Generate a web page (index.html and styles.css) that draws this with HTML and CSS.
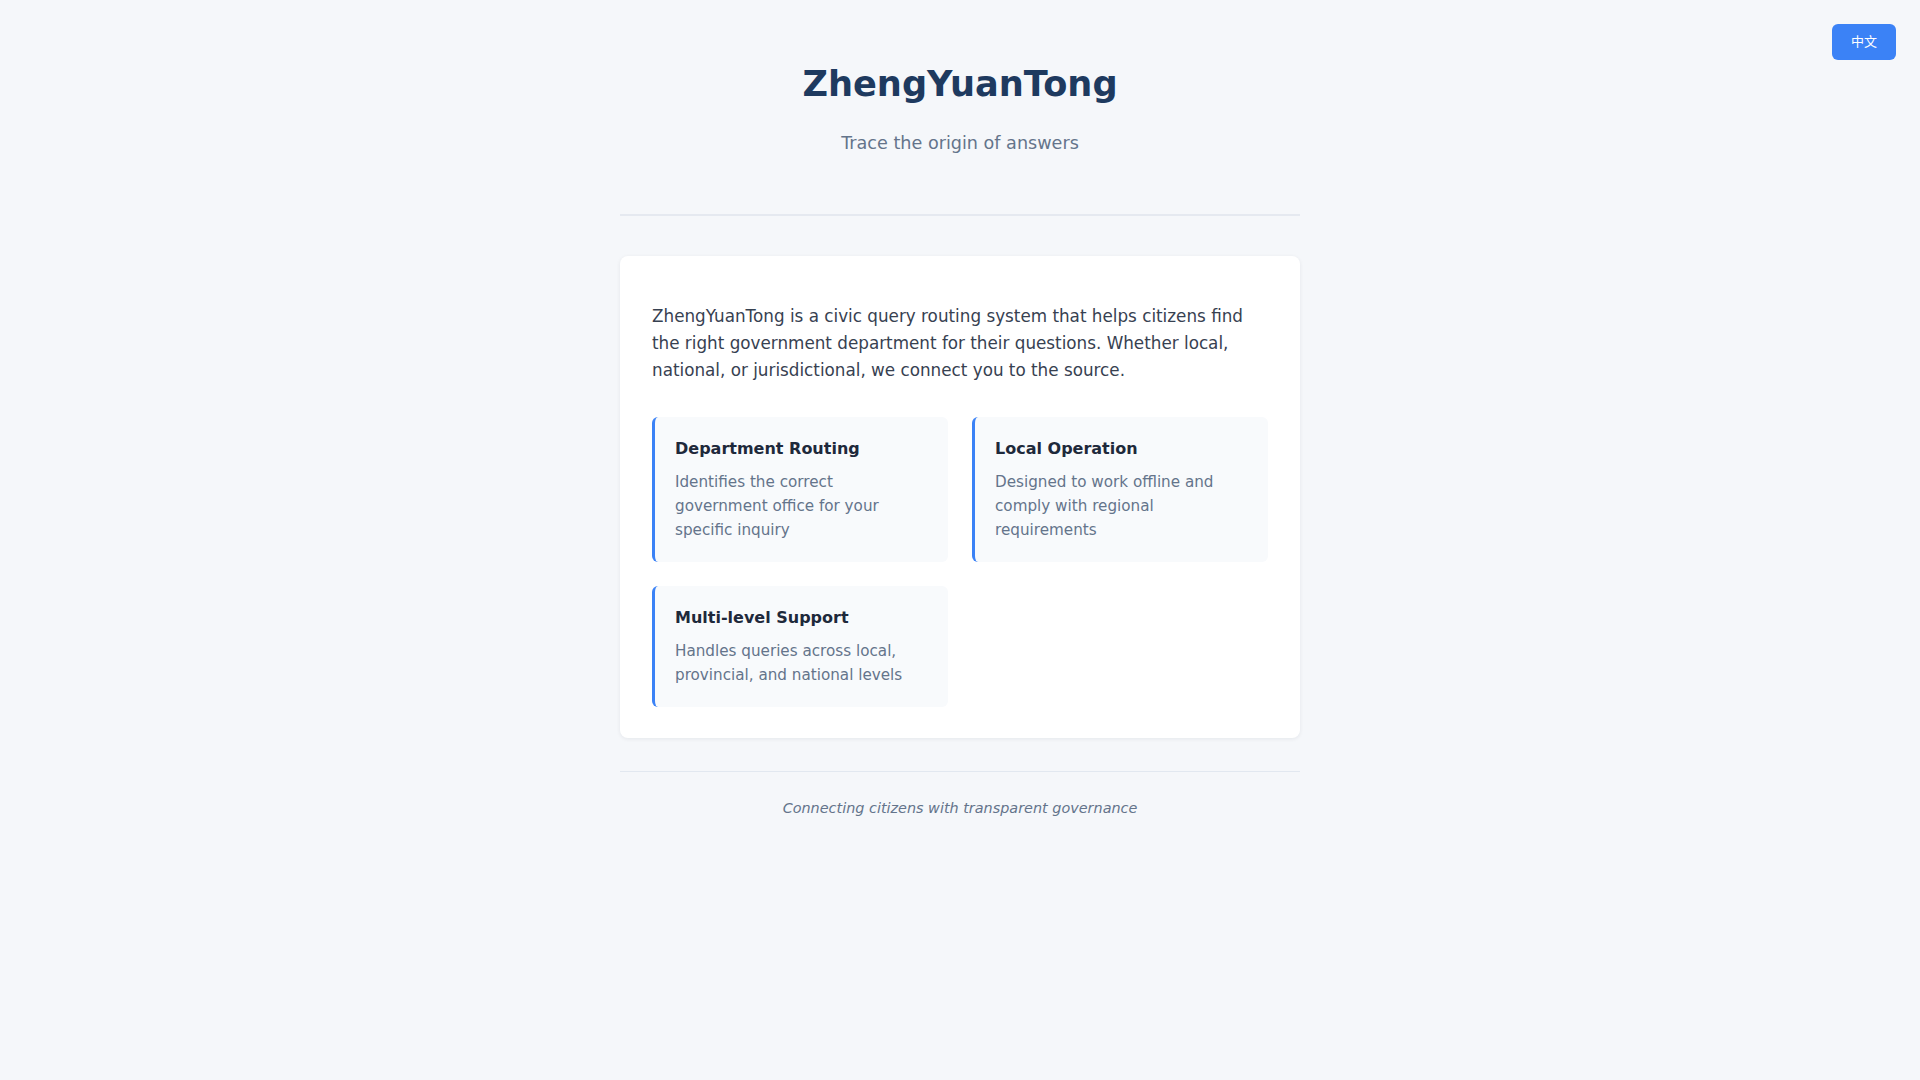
FILE: index.html
```html
<!DOCTYPE html>
<html lang="en">
<head>
<meta charset="utf-8">
<title>ZhengYuanTong</title>
<link rel="stylesheet" href="styles.css">
</head>
<body>
<button class="lang-btn">中文</button>
<div class="container">
  <header class="header">
    <h1 class="title">ZhengYuanTong</h1>
    <p class="subtitle">Trace the origin of answers</p>
  </header>
  <main class="card">
    <p class="intro">ZhengYuanTong is a civic query routing system that helps citizens find the right government department for their questions. Whether local, national, or jurisdictional, we connect you to the source.</p>
    <div class="features">
      <div class="feature">
        <h3 class="feature-title">Department Routing</h3>
        <p class="feature-desc">Identifies the correct government office for your specific inquiry</p>
      </div>
      <div class="feature">
        <h3 class="feature-title">Local Operation</h3>
        <p class="feature-desc">Designed to work offline and comply with regional requirements</p>
      </div>
      <div class="feature">
        <h3 class="feature-title">Multi-level Support</h3>
        <p class="feature-desc">Handles queries across local, provincial, and national levels</p>
      </div>
    </div>
  </main>
  <footer class="footer">
    <p class="footer-text">Connecting citizens with transparent governance</p>
  </footer>
</div>
</body>
</html>
```
FILE: styles.css
```css
* { box-sizing: border-box; }
html, body { margin: 0; padding: 0; }
body {
  background: #f5f7fa;
  font-family: "DejaVu Sans", "Noto Sans CJK SC", sans-serif;
  color: #334155;
  min-height: 100vh;
}
.lang-btn {
  position: absolute;
  top: 24px;
  right: 24px;
  background: #3b82f6;
  color: #ffffff;
  border: none;
  border-radius: 6px;
  padding: 9px 19px;
  font-size: 13px;
  line-height: 18px;
  font-family: "DejaVu Sans", "Noto Sans CJK SC", sans-serif;
  cursor: pointer;
}
.container {
  width: 680px;
  margin: 0 auto;
  padding-top: 63px;
}
.header {
  text-align: center;
  border-bottom: 2px solid #e5e9f0;
  padding-bottom: 58px;
  margin-bottom: 40px;
}
.title {
  margin: 0;
  font-size: 35.2px;
  line-height: 42px;
  font-weight: 700;
  color: #1e3a5f;
}
.subtitle {
  margin: 25px 0 0;
  font-size: 17.6px;
  line-height: 26px;
  color: #64748b;
}
.card {
  background: #ffffff;
  border-radius: 8px;
  box-shadow: 0 1px 4px rgba(15, 23, 42, 0.07);
  padding: 32px 32px 31px;
}
.intro {
  margin: 15px 0 33px;
  font-size: 16.8px;
  line-height: 26.9px;
  color: #374151;
}
.features {
  display: grid;
  grid-template-columns: 1fr 1fr;
  gap: 24px;
}
.feature {
  background: #f8fafc;
  border-left: 3px solid #3b82f6;
  border-radius: 6px;
  padding: 22px 20px 20px 20px;
}
.feature-title {
  margin: 0 0 12px;
  font-size: 16px;
  line-height: 19px;
  font-weight: 700;
  color: #1e293b;
}
.feature-desc {
  margin: 0;
  font-size: 15.2px;
  line-height: 24px;
  color: #64748b;
}
.footer {
  margin-top: 33px;
  border-top: 1px solid #e2e8f0;
  padding-top: 26px;
  text-align: center;
}
.footer-text {
  margin: 0;
  font-size: 14.4px;
  line-height: 21px;
  font-style: italic;
  color: #64748b;
}
```
